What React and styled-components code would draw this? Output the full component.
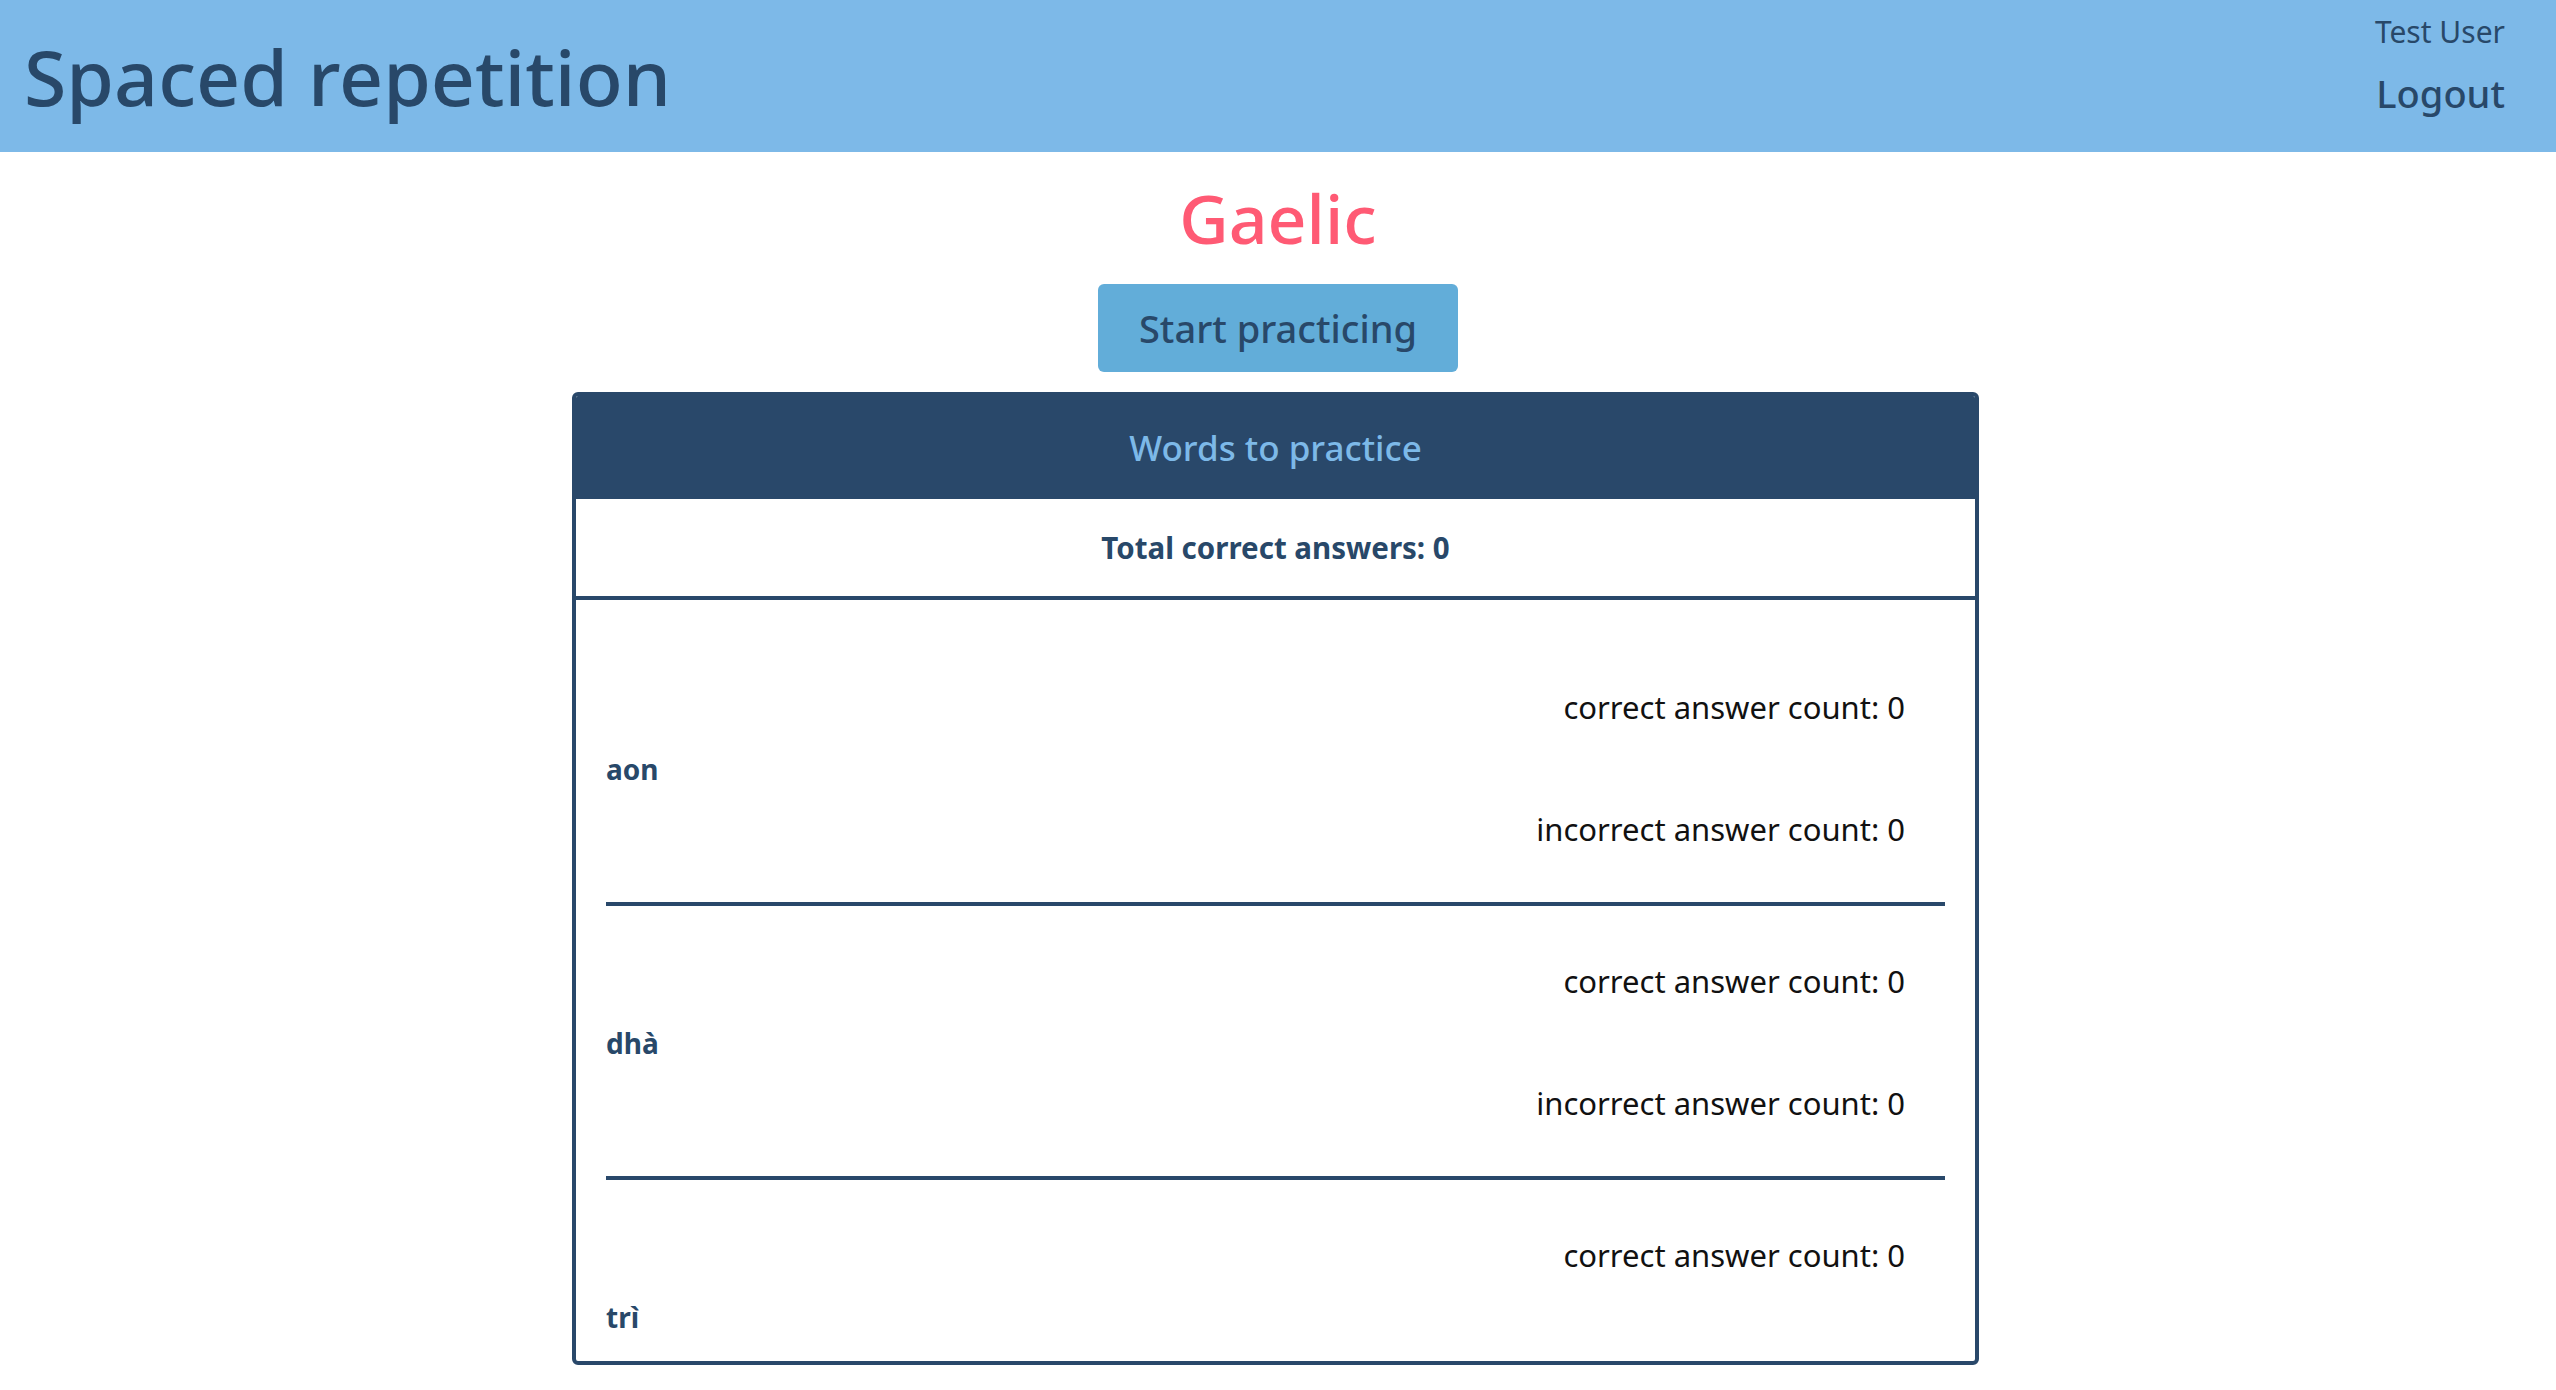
import React from "react";
import styled, { createGlobalStyle } from "styled-components";

const GlobalStyle = createGlobalStyle`
  html, body {
    margin: 0;
    padding: 0;
    background: #fff;
    font-family: "Noto Sans", "Open Sans", sans-serif;
  }
  * {
    box-sizing: border-box;
  }
`;

const words = [
  { id: 1, original: "aon", correct: 0, incorrect: 0 },
  { id: 2, original: "dhà", correct: 0, incorrect: 0 },
  { id: 3, original: "trì", correct: 0, incorrect: 0 },
];

export default function App() {
  return (
    <>
      <GlobalStyle />
      <Header>
        <Title>Spaced repetition</Title>
        <UserBox>
          <UserName>Test User</UserName>
          <Logout href="#">Logout</Logout>
        </UserBox>
      </Header>
      <Main>
        <Language>Gaelic</Language>
        <StartButton>Start practicing</StartButton>
        <Card>
          <CardHeader>Words to practice</CardHeader>
          <Total>Total correct answers: 0</Total>
          <WordList>
            {words.map((w) => (
              <WordItem key={w.id}>
                <Word>{w.original}</Word>
                <Counts>
                  <Count>correct answer count: {w.correct}</Count>
                  <Count>incorrect answer count: {w.incorrect}</Count>
                </Counts>
              </WordItem>
            ))}
          </WordList>
        </Card>
      </Main>
    </>
  );
}

const Header = styled.header`
  display: flex;
  justify-content: space-between;
  align-items: center;
  height: 152px;
  padding: 0 51px 0 24px;
  background: #7db9e8;
  color: #284869;
`;

const Title = styled.h1`
  margin: 0;
  font-size: 77px;
  font-weight: 500;
  line-height: 1;
`;

const UserBox = styled.div`
  align-self: flex-start;
  display: flex;
  flex-direction: column;
  align-items: flex-end;
  padding-top: 12px;
`;

const UserName = styled.span`
  font-size: 30px;
  font-weight: 400;
  line-height: 40px;
`;

const Logout = styled.a`
  margin-top: 17px;
  font-size: 38px;
  font-weight: 500;
  line-height: 48px;
  color: #284869;
  text-decoration: none;
`;

const Main = styled.main`
  display: flex;
  flex-direction: column;
  align-items: center;
`;

const Language = styled.h2`
  margin: 26px 0 0;
  font-size: 68px;
  font-weight: 500;
  line-height: 80px;
  color: #ff5a74;
`;

const StartButton = styled.button`
  margin-top: 26px;
  width: 360px;
  height: 88px;
  border: none;
  border-radius: 6px;
  background: #62add9;
  color: #284869;
  font-family: inherit;
  font-size: 38px;
  font-weight: 500;
  cursor: pointer;
`;

const Card = styled.section`
  margin: 20px 5px 0 0;
  width: 1407px;
  height: 973px;
  border: 4px solid #29486a;
  border-radius: 6px;
  overflow: hidden;
  display: flex;
  flex-direction: column;
`;

const CardHeader = styled.div`
  display: flex;
  align-items: center;
  justify-content: center;
  height: 103px;
  flex-shrink: 0;
  background: #29486a;
  color: #7db9e8;
  font-size: 35px;
  font-weight: 500;
`;

const Total = styled.div`
  display: flex;
  align-items: center;
  justify-content: center;
  height: 101px;
  flex-shrink: 0;
  border-bottom: 4px solid #29486a;
  color: #284869;
  font-size: 29.5px;
  font-weight: 700;
`;

const WordList = styled.ul`
  list-style: none;
  margin: 0;
  padding: 32px 30px 0;
`;

const WordItem = styled.li`
  display: flex;
  justify-content: space-between;
  align-items: center;
  height: 274px;
  border-bottom: 4px solid #29486a;
`;

const Word = styled.span`
  margin-top: 4px;
  color: #284869;
  font-size: 28px;
  font-weight: 700;
`;

const Counts = styled.div`
  display: flex;
  flex-direction: column;
  align-items: flex-end;
  gap: 82px;
  padding: 0 40px 0 0;
  margin-top: 2px;
`;

const Count = styled.p`
  margin: 0;
  font-size: 31px;
  line-height: 40px;
  color: #111;
`;
